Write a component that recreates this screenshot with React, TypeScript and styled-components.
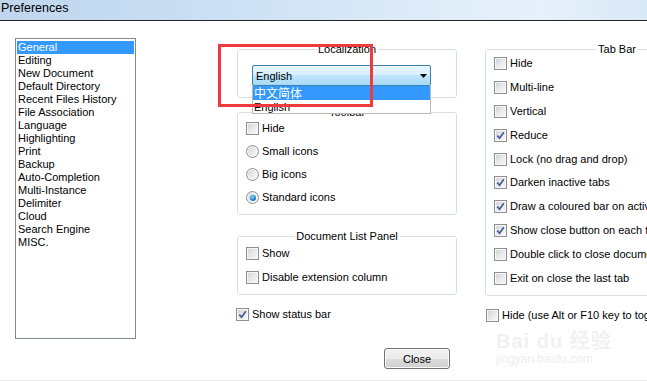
import React from 'react';
import styled, { createGlobalStyle } from 'styled-components';

const GlobalStyle = createGlobalStyle`
  html, body {
    margin: 0;
    padding: 0;
    overflow: hidden;
    background: #fff;
  }
  #root {
    width: 647px;
    height: 381px;
    overflow: hidden;
  }
`;

const Window = styled.div`
  position: relative;
  width: 834px;
  height: 381px;
  box-sizing: border-box;
  display: flex;
  flex-direction: column;
  font-family: "Liberation Sans", Arial, sans-serif;
  font-size: 11px;
  color: #000;
  border-bottom: 1px solid #ececec;
`;

const TitleBar = styled.div`
  flex: none;
  height: 20px;
  padding-left: 1px;
  font-size: 12.5px;
  line-height: 16px;
  color: #000;
  background: linear-gradient(to right, #bfd6ee 0%, #cadff3 25%, #deebf8 50%, #e6f0fa 65%, #d3e4f4 85%, #c8dcf1 100%);
  border-bottom: 1px solid #262626;
`;

const Main = styled.div`
  display: flex;
  align-items: flex-start;
  padding-left: 15px;
`;

const ListBox = styled.div`
  width: 121px;
  height: 301px;
  margin-top: 17px;
  box-sizing: border-box;
  border: 1px solid #828790;
  padding: 2px 1px 1px;
`;

const ListItem = styled.div<{ $selected?: boolean }>`
  height: 13px;
  line-height: 13px;
  padding-left: 1px;
  white-space: nowrap;
  background: ${p => (p.$selected ? '#3399ff' : 'transparent')};
  color: ${p => (p.$selected ? '#fff' : '#000')};
`;

const Column = styled.div<{ $gap: number; $width: number }>`
  display: flex;
  flex-direction: column;
  flex: none;
  width: ${p => p.$width}px;
  margin-left: ${p => p.$gap}px;
`;

const Group = styled.div<{ $top: number; $height: number; $pad: string }>`
  position: relative;
  box-sizing: border-box;
  margin-top: ${p => p.$top}px;
  height: ${p => p.$height}px;
  padding: ${p => p.$pad};
  border: 1px solid #d5dfe5;
  border-radius: 3px;
`;

const Legend = styled.div`
  position: absolute;
  top: -7px;
  left: 50%;
  transform: translateX(-50%);
  padding: 0 2px;
  line-height: 13px;
  background: #fff;
  white-space: nowrap;
`;

const Combo = styled.div`
  position: relative;
  width: 179px;
  height: 21px;
  box-sizing: border-box;
  display: flex;
  align-items: center;
  padding: 0 3px 0 3px;
  border: 1px solid #3c7fb1;
  border-radius: 2px;
  background: linear-gradient(#eaf6fd 0%, #d9f0fc 45%, #bee6fd 50%, #a7d9f5 100%);
`;

const Arrow = styled.svg`
  margin-left: auto;
  flex: none;
`;

const DropList = styled.div`
  position: absolute;
  top: 20px;
  left: -1px;
  width: 179px;
  height: 28px;
  box-sizing: border-box;
  border: 1px solid #b9b9b9;
  border-top: none;
  background: #fff;
  overflow: hidden;
  z-index: 2;
`;

const DropItem = styled.div<{ $selected?: boolean; $cjk?: boolean }>`
  height: 14px;
  line-height: 14px;
  padding-left: 1px;
  white-space: nowrap;
  font-family: ${p => (p.$cjk ? '"Noto Sans CJK SC", "Liberation Sans", sans-serif' : '"Liberation Sans", Arial, sans-serif')};
  font-size: ${p => (p.$cjk ? '12px' : '11px')};
  background: ${p => (p.$selected ? '#3399ff' : '#fff')};
  color: ${p => (p.$selected ? '#fff' : '#000')};
`;

const Row = styled.div<{ $h: number; $top?: number; $left?: number }>`
  display: flex;
  align-items: center;
  gap: 3px;
  height: ${p => p.$h}px;
  margin-top: ${p => p.$top ?? 0}px;
  margin-left: ${p => p.$left ?? 0}px;
  white-space: nowrap;
  line-height: 13px;
`;

const Box = styled.span<{ $round?: boolean }>`
  flex: none;
  width: 13px;
  height: 13px;
  box-sizing: border-box;
  display: flex;
  align-items: center;
  justify-content: center;
  border: 1px solid #8f8f8f;
  border-radius: ${p => (p.$round ? '50%' : '0')};
  background: linear-gradient(135deg, #cfcfcf 0%, #e9e9e9 50%, #fafafa 100%);
  box-shadow: inset 0 0 0 1px #f7f7f7;
`;

const Dot = styled.span`
  width: 6px;
  height: 6px;
  border-radius: 50%;
  background: radial-gradient(circle at 40% 35%, #9adcfb 0%, #2c8fd0 45%, #0b4f86 100%);
`;

const Footer = styled.div`
  display: flex;
  justify-content: center;
  margin-top: 9px;
`;

const Button = styled.button`
  width: 66px;
  height: 21px;
  padding: 0;
  border: 1px solid #707070;
  border-radius: 3px;
  font-family: "Liberation Sans", Arial, sans-serif;
  font-size: 11px;
  color: #000;
  background: linear-gradient(#f2f2f2 0%, #ebebeb 50%, #dddddd 51%, #cfcfcf 100%);
  box-shadow: inset 0 0 0 1px #fbfbfb;
`;

const RedFrame = styled.div`
  position: absolute;
  left: 218px;
  top: 44px;
  width: 155px;
  height: 63px;
  box-sizing: border-box;
  border: 3px solid #f03a3d;
  z-index: 3;
  pointer-events: none;
`;

const Watermark = styled.div`
  position: absolute;
  left: 496px;
  top: 330px;
  display: flex;
  flex-direction: column;
  color: #f1f1f1;
  pointer-events: none;
`;

const MarkBig = styled.span`
  font-family: "Liberation Sans", "Noto Sans CJK SC", sans-serif;
  font-size: 20px;
  font-weight: bold;
  line-height: 22px;
  letter-spacing: 1px;
`;

const MarkSmall = styled.span`
  font-family: "Liberation Sans", sans-serif;
  font-size: 12px;
  line-height: 14px;
  color: #eeeeee;
`;

const CheckMark = () => (
  <svg width="9" height="9" viewBox="0 0 9 9">
    <path d="M1.3 4.6 L3.6 7.2 L7.8 1.2" fill="none" stroke="#3f5a9c" strokeWidth="1.7" />
  </svg>
);

const Option = ({
  label,
  checked,
  radio,
  h,
  top,
  left,
}: {
  label: string;
  checked?: boolean;
  radio?: boolean;
  h: number;
  top?: number;
  left?: number;
}) => (
  <Row $h={h} $top={top} $left={left}>
    <Box $round={radio}>{checked && (radio ? <Dot /> : <CheckMark />)}</Box>
    <span>{label}</span>
  </Row>
);

const categories = [
  'General',
  'Editing',
  'New Document',
  'Default Directory',
  'Recent Files History',
  'File Association',
  'Language',
  'Highlighting',
  'Print',
  'Backup',
  'Auto-Completion',
  'Multi-Instance',
  'Delimiter',
  'Cloud',
  'Search Engine',
  'MISC.',
];

const tabBar: [string, boolean][] = [
  ['Hide', false],
  ['Multi-line', false],
  ['Vertical', false],
  ['Reduce', true],
  ['Lock (no drag and drop)', false],
  ['Darken inactive tabs', true],
  ['Draw a coloured bar on active tab', true],
  ['Show close button on each tab', true],
  ['Double click to close document', false],
  ['Exit on close the last tab', false],
];

export default function App() {
  return (
    <>
      <GlobalStyle />
      <Window>
        <TitleBar>Preferences</TitleBar>
        <Main>
          <ListBox>
            {categories.map((c, i) => (
              <ListItem key={c} $selected={i === 0}>
                {c}
              </ListItem>
            ))}
          </ListBox>

          <Column $gap={101} $width={220}>
            <Group $top={28} $height={49} $pad="15px 0 0 14px">
              <Legend>Localization</Legend>
              <Combo>
                <span>English</span>
                <Arrow width="7" height="4" viewBox="0 0 7 4">
                  <path d="M0 0 H7 L3.5 4 Z" fill="#000" />
                </Arrow>
                <DropList>
                  <DropItem $selected $cjk>
                    中文简体
                  </DropItem>
                  <DropItem>English</DropItem>
                </DropList>
              </Combo>
            </Group>

            <Group $top={14} $height={103} $pad="4px 0 0 8px">
              <Legend>Toolbar</Legend>
              <Option h={23} label="Hide" />
              <Option h={23} radio label="Small icons" />
              <Option h={23} radio label="Big icons" />
              <Option h={23} radio checked label="Standard icons" />
            </Group>

            <Group $top={21} $height={59} $pad="4px 0 0 8px">
              <Legend>Document List Panel</Legend>
              <Option h={24} label="Show" />
              <Option h={24} label="Disable extension column" />
            </Group>

            <Option h={24} top={7} left={-1} checked label="Show status bar" />
          </Column>

          <Column $gap={28} $width={264}>
            <Group $top={28} $height={247} $pad="2px 0 0 8px">
              <Legend>Tab Bar</Legend>
              {tabBar.map(([label, checked]) => (
                <Option key={label} h={23.8} label={label} checked={checked} />
              ))}
            </Group>
            <Option h={24} top={7} left={1} label="Hide (use Alt or F10 key to toggle)" />
          </Column>
        </Main>

        <Footer>
          <Button>Close</Button>
        </Footer>

        <RedFrame />
        <Watermark>
          <MarkBig>Bai du 经验</MarkBig>
          <MarkSmall>jingyan.baidu.com</MarkSmall>
        </Watermark>
      </Window>
    </>
  );
}
